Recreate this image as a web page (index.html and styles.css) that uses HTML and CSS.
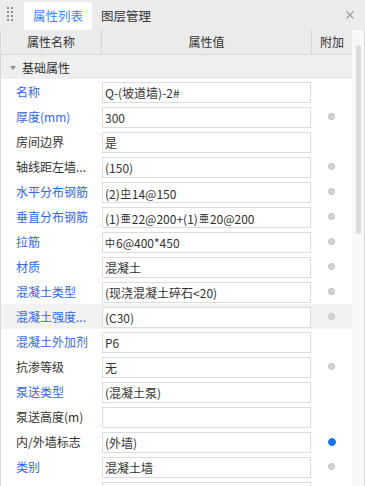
FILE: index.html
```html
<!DOCTYPE html>
<html>
  <head>
    <meta charset="utf-8" />
    <meta name="viewport" content="width=device-width, initial-scale=1" />
    <title>属性列表</title>
    <link rel="stylesheet" href="styles.css">
  </head>
  <body>
    <div class="panel">
      <div class="tabbar">
        <span class="grip"></span>
        <span class="tab active">属性列表</span>
        <span class="tab">图层管理</span>
        <svg class="close" width="8" height="8" viewBox="0 0 8 8">
          <path d="M0.5 0.5 L7.5 7.5 M7.5 0.5 L0.5 7.5" stroke="#9a9a9a" stroke-width="1.1" fill="none" />
        </svg>
      </div>

      <div class="content">
        <div class="grid">
          <div class="head">
            <span class="h-name">属性名称</span>
            <span>属性值</span>
            <span class="h-extra">附加</span>
          </div>

          <div class="group"><span class="caret"></span>基础属性</div>

          <div class="row">
            <span class="name link">名称</span>
            <span class="val">Q-(坡道墙)-2#</span>
            <span></span>
          </div>
          <div class="row">
            <span class="name link">厚度(mm)</span>
            <span class="val">300</span>
            <span class="dot"></span>
          </div>
          <div class="row">
            <span class="name">房间边界</span>
            <span class="val">是</span>
            <span></span>
          </div>
          <div class="row">
            <span class="name">轴线距左墙...</span>
            <span class="val">(150)</span>
            <span class="dot"></span>
          </div>
          <div class="row">
            <span class="name link">水平分布钢筋</span>
            <span class="val">(2)<span class="rb under">中</span>14@150</span>
            <span class="dot"></span>
          </div>
          <div class="row">
            <span class="name link">垂直分布钢筋</span>
            <span class="val">(1)<span class="rb">亜</span>22@200+(1)<span class="rb">亜</span>20@200</span>
            <span class="dot"></span>
          </div>
          <div class="row">
            <span class="name link">拉筋</span>
            <span class="val"><span class="rb plain">中</span>6@400*450</span>
            <span class="dot"></span>
          </div>
          <div class="row">
            <span class="name link">材质</span>
            <span class="val">混凝土</span>
            <span class="dot"></span>
          </div>
          <div class="row">
            <span class="name link">混凝土类型</span>
            <span class="val">(现浇混凝土碎石&lt;20)</span>
            <span class="dot"></span>
          </div>
          <div class="row hl">
            <span class="name link">混凝土强度...</span>
            <span class="val">(C30)</span>
            <span class="dot"></span>
          </div>
          <div class="row">
            <span class="name link">混凝土外加剂</span>
            <span class="val">P6</span>
            <span></span>
          </div>
          <div class="row">
            <span class="name">抗渗等级</span>
            <span class="val">无</span>
            <span class="dot"></span>
          </div>
          <div class="row">
            <span class="name link">泵送类型</span>
            <span class="val">(混凝土泵)</span>
            <span></span>
          </div>
          <div class="row">
            <span class="name">泵送高度(m)</span>
            <span class="val"></span>
            <span></span>
          </div>
          <div class="row">
            <span class="name">内/外墙标志</span>
            <span class="val">(外墙)</span>
            <span class="dot on"></span>
          </div>
          <div class="row">
            <span class="name link">类别</span>
            <span class="val">混凝土墙</span>
            <span class="dot"></span>
          </div>
          <div class="row">
            <span class="name"></span>
            <span class="val"></span>
            <span></span>
          </div>
        </div>

        <div class="scroll"><div class="thumb"></div></div>
      </div>
    </div>
  </body>
</html>
```

FILE: styles.css
```css
body {
  margin: 0;
  background: #ececec;
  font-family: "Noto Sans CJK SC", "Noto Sans", sans-serif;
  font-size: 12px;
  color: #333;
}

* {
  box-sizing: border-box;
}

.panel {
  width: 365px;
  height: 486px;
  overflow: hidden;
  display: flex;
  flex-direction: column;
}

/* tab strip */
.tabbar {
  height: 30px;
  flex-shrink: 0;
  display: flex;
  align-items: flex-end;
}

.grip {
  align-self: flex-start;
  width: 8px;
  height: 16px;
  margin: 6px 10px 0 6px;
  background: radial-gradient(circle at 2px 2px, #8e8e8e 0.9px, transparent 1.3px) 0 0 / 4px 4px;
}

.tab {
  height: 28px;
  line-height: 28px;
  padding: 0 9px;
  font-size: 12.5px;
}

.tab.active {
  background: #fff;
  color: #3b86ee;
}

.close {
  align-self: center;
  margin: 0 11px 0 auto;
}

/* property grid */
.content {
  flex: 1;
  min-height: 0;
  display: flex;
  background: #fff;
  border-left: 1px solid #d9d9d9;
  border-right: 1px solid #d9d9d9;
}

.grid {
  width: 351px;
  flex-shrink: 0;
}

.head,
.row {
  display: grid;
  grid-template-columns: 101px 209px 41px;
}

.head {
  height: 25px;
  line-height: 24px;
  background: #ebebeb;
  border-bottom: 1px solid #d6d6d6;
  text-align: center;
}

.h-name {
  border-right: 1px solid #d4d4d4;
}

.h-extra {
  border-left: 1px solid #d4d4d4;
}

.group {
  height: 24px;
  display: flex;
  align-items: center;
  background: #efefef;
}

.caret {
  width: 0;
  height: 0;
  margin: 1px 6px 0 9px;
  border-left: 3px solid transparent;
  border-right: 3px solid transparent;
  border-top: 4px solid #8a8a8a;
}

.row {
  height: 25px;
}

.row.hl {
  background: #f2f2f2;
}

.name {
  padding-left: 15px;
  line-height: 25px;
  white-space: nowrap;
  overflow: hidden;
}

.name.link {
  color: #3467db;
}

.val {
  margin-top: 3px;
  height: 21px;
  line-height: 19px;
  padding-left: 2px;
  border: 1px solid #dcdcdc;
  background: #fff;
  white-space: nowrap;
  overflow: hidden;
}

.rb {
  font-size: 10px;
  vertical-align: 2px;
  margin: 0 1px;
}

.rb.under {
  text-decoration: underline;
}

.rb.plain {
  vertical-align: 1px;
  margin-left: 0;
}

.dot {
  justify-self: center;
  align-self: center;
  width: 7px;
  height: 7px;
  border-radius: 50%;
  background: #d4d4d4;
  border: 1px solid #bdbdbd;
}

.dot.on {
  width: 8px;
  height: 8px;
  background: #1c72e8;
  border-color: #1c72e8;
}

/* scrollbar */
.scroll {
  flex: 1;
  background: #f8f8f8;
}

.thumb {
  width: 5px;
  height: 189px;
  margin: 15px 0 0 4px;
  border-radius: 3px;
  background: #dcdcdc;
}
```
